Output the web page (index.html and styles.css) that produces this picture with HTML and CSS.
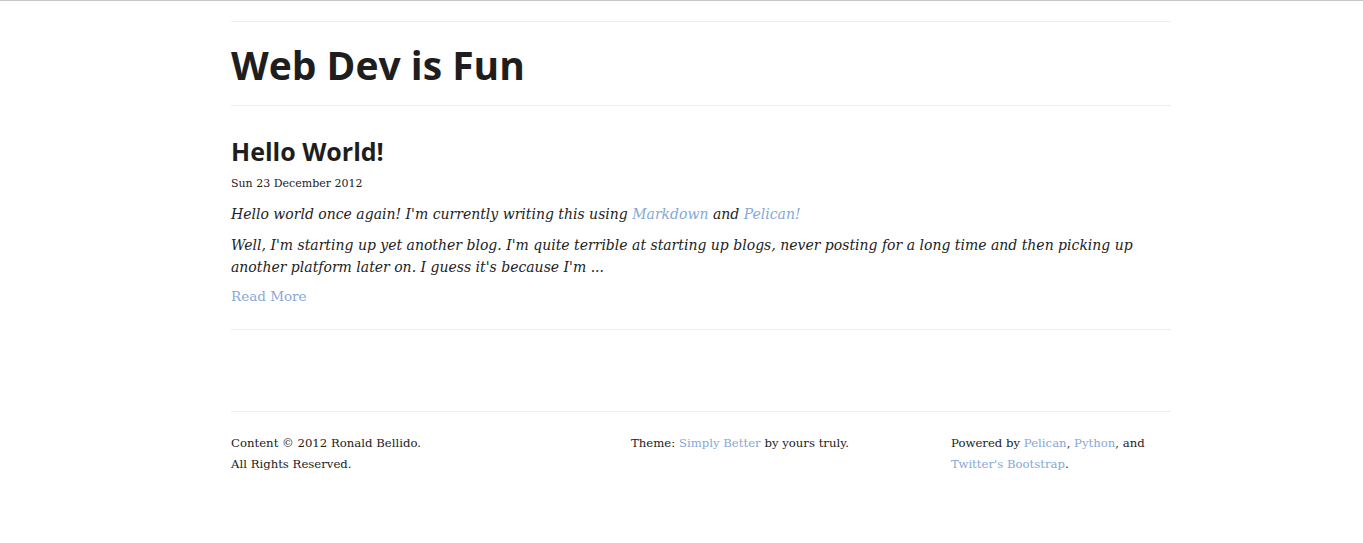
FILE: index.html
```html
<!DOCTYPE html>
<html>
<head>
<meta charset="utf-8">
<link rel="stylesheet" href="styles.css">
</head>
<body>
<div class="container">
  <header class="site-header">
    <h1 class="site-title">Web Dev is Fun</h1>
  </header>
  <article class="post">
    <h2 class="post-title">Hello World!</h2>
    <div class="post-date">Sun 23 December 2012</div>
    <div class="summary">
      <p>Hello world once again! I'm currently writing this using <a href="#">Markdown</a> and <a href="#">Pelican!</a></p>
      <p>Well, I'm starting up yet another blog. I'm quite terrible at starting up blogs, never posting for a long time and then picking up another platform later on. I guess it's because I'm ...</p>
    </div>
    <a class="read-more" href="#">Read More</a>
  </article>
  <footer class="site-footer">
    <div class="col col-5">Content © 2012 Ronald Bellido.<br>All Rights Reserved.</div>
    <div class="col col-4">Theme: <a href="#">Simply Better</a> by yours truly.</div>
    <div class="col col-3">Powered by <a href="#">Pelican</a>, <a href="#">Python</a>, and <a href="#">Twitter's Bootstrap</a>.</div>
  </footer>
</div>
</body>
</html>
```
FILE: styles.css
```css
html, body {
  margin: 0;
  padding: 0;
}
body {
  border-top: 1px solid #c6c6c6;
  padding-left: 39px;
  background: #fff;
  color: #222;
  font-family: "DejaVu Serif", "Liberation Serif", serif;
}
a {
  color: #86a9d3;
  text-decoration: none;
}
.container {
  width: 940px;
  margin: 0 auto;
  padding-top: 20px;
}
.site-header {
  border-top: 1px solid #eee;
  border-bottom: 1px solid #eee;
}
.site-title {
  font-family: "Open Sans", sans-serif;
  font-weight: 700;
  font-size: 39px;
  line-height: 50px;
  margin: 18px 0 15px;
  color: #1e1e1e;
}
.post {
  border-bottom: 1px solid #eee;
  padding: 28px 0 22px;
}
.post-title {
  font-family: "Open Sans", sans-serif;
  font-weight: 700;
  font-size: 25px;
  line-height: 34px;
  margin: 0 0 7px;
  color: #1e1e1e;
}
.post-date {
  font-size: 11px;
  line-height: 18px;
  margin-bottom: 10px;
}
.summary p {
  font-style: italic;
  font-size: 14px;
  line-height: 22px;
  margin: 0 0 9px;
}
.summary p:last-child {
  margin-bottom: 7px;
}
.read-more {
  display: inline-block;
  font-size: 13.5px;
  line-height: 22px;
}
.site-footer {
  margin-top: 81px;
  border-top: 1px solid #eee;
  padding-top: 21px;
  display: flex;
  gap: 20px;
  font-size: 11.7px;
  line-height: 21px;
}
.col-5 { width: 380px; }
.col-4 { width: 300px; }
.col-3 { width: 220px; }
```
